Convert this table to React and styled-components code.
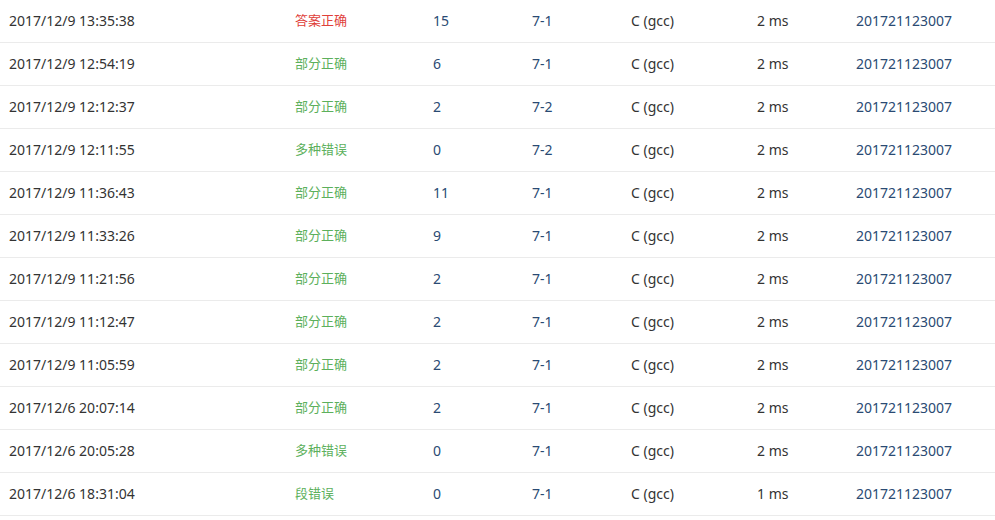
import React from 'react'
import styled, { createGlobalStyle } from 'styled-components'

const rows = [
  ['2017/12/9 13:35:38', '答案正确', 'ok', '15', '7-1', '2 ms'],
  ['2017/12/9 12:54:19', '部分正确', 'part', '6', '7-1', '2 ms'],
  ['2017/12/9 12:12:37', '部分正确', 'part', '2', '7-2', '2 ms'],
  ['2017/12/9 12:11:55', '多种错误', 'part', '0', '7-2', '2 ms'],
  ['2017/12/9 11:36:43', '部分正确', 'part', '11', '7-1', '2 ms'],
  ['2017/12/9 11:33:26', '部分正确', 'part', '9', '7-1', '2 ms'],
  ['2017/12/9 11:21:56', '部分正确', 'part', '2', '7-1', '2 ms'],
  ['2017/12/9 11:12:47', '部分正确', 'part', '2', '7-1', '2 ms'],
  ['2017/12/9 11:05:59', '部分正确', 'part', '2', '7-1', '2 ms'],
  ['2017/12/6 20:07:14', '部分正确', 'part', '2', '7-1', '2 ms'],
  ['2017/12/6 20:05:28', '多种错误', 'part', '0', '7-1', '2 ms'],
  ['2017/12/6 18:31:04', '段错误', 'part', '0', '7-1', '1 ms'],
]

const App = () => {
  return (
    <>
      <GlobalStyle />
      <Table>
        {rows.map((r, i) => (
          <Row key={i}>
            <Cell>{r[0]}</Cell>
            <Status $ok={r[2] === 'ok'}>{r[1]}</Status>
            <LinkCell>{r[3]}</LinkCell>
            <LinkCell>{r[4]}</LinkCell>
            <Cell>C (gcc)</Cell>
            <Cell>{r[5]}</Cell>
            <LinkCell>201721123007</LinkCell>
          </Row>
        ))}
      </Table>
    </>
  )
}

const GlobalStyle = createGlobalStyle`
body {
  margin:0;
  background:#fff;
  font-family:"Noto Sans", "Noto Sans CJK SC", sans-serif;
}
`;

const Table = styled.div`
display:flex;
flex-direction:column;
width:995px;
`;

const Row = styled.div`
display:grid;
grid-template-columns:286px 138px 99px 99px 126px 99px 1fr;
align-items:center;
height:42px;
padding-left:9px;
border-bottom:1px solid #ebebeb;
font-size:14px;
line-height:20px;
`;

const Cell = styled.div`
color:#333;
white-space:nowrap;
`;

const LinkCell = styled(Cell)`
color:#2a4a73;
`;

const Status = styled(Cell)`
font-family:"Noto Sans CJK SC", sans-serif;
font-size:13px;
margin-top:-2px;
color:${p => (p.$ok ? '#e0403a' : '#5cb05c')};
`;

export default App
